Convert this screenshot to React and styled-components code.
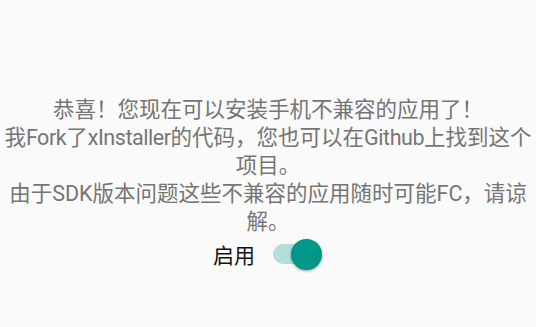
import React, { useState } from 'react';
import styled, { createGlobalStyle } from 'styled-components';

const GlobalStyle = createGlobalStyle`
  html, body {
    margin: 0;
    padding: 0;
    background: #fafafa;
  }
  body {
    font-family: Roboto, "Noto Sans CJK SC", sans-serif;
  }
`;

const Screen = styled.div`
  width: 536px;
  height: 327px;
  display: flex;
  flex-direction: column;
  align-items: center;
  padding-top: 96px;
  box-sizing: border-box;
  background: #fafafa;
`;

const Message = styled.p`
  margin: 0;
  width: 100%;
  font-size: 21.5px;
  line-height: 28px;
  color: #757575;
  text-align: center;
`;

// latin words in the reference are set a touch tighter than Roboto
const Latin = styled.span`
  letter-spacing: -0.45px;
`;

const ToggleRow = styled.label`
  display: flex;
  align-items: center;
  gap: 18px;
  margin-top: 2px;
  cursor: pointer;
`;

const ToggleLabel = styled.span`
  font-size: 21px;
  color: #111;
`;

const Switch = styled.span`
  position: relative;
  width: 50px;
  height: 32px;
  display: inline-block;
`;

const Track = styled.span`
  position: absolute;
  left: 0;
  top: 6px;
  width: 40px;
  height: 20px;
  border-radius: 10px;
  background: ${({ $on }) => ($on ? '#b2dfdb' : '#bdbdbd')};
`;

const Thumb = styled.span`
  position: absolute;
  top: 1px;
  left: ${({ $on }) => ($on ? '18px' : '0')};
  width: 31px;
  height: 31px;
  border-radius: 50%;
  background: ${({ $on }) => ($on ? '#009688' : '#f1f1f1')};
  box-shadow: 0 1px 3px rgba(0, 0, 0, 0.35);
  transition: left 0.15s;
`;

export default function App() {
  const [on, setOn] = useState(true);
  return (
    <>
      <GlobalStyle />
      <Screen>
        <Message>恭喜！您现在可以安装手机不兼容的应用了！</Message>
        <Message>
          我<Latin>Fork</Latin>了<Latin>xInstaller</Latin>的代码，您也可以在<Latin>Github</Latin>上找到这个项目。
        </Message>
        <Message>由于SDK版本问题这些不兼容的应用随时可能FC，请谅解。</Message>
        <ToggleRow onClick={() => setOn(!on)}>
          <ToggleLabel>启用</ToggleLabel>
          <Switch>
            <Track $on={on} />
            <Thumb $on={on} />
          </Switch>
        </ToggleRow>
      </Screen>
    </>
  );
}
